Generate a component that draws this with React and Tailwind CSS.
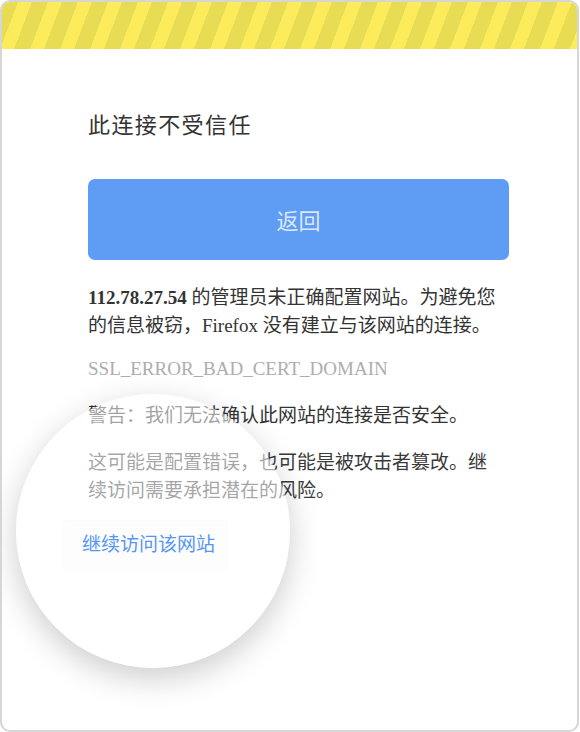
const bodyFont = {
  fontFamily: '"Liberation Serif", "Noto Sans CJK SC", serif'
}

export default function App() {
  return (
    <div className="min-h-[732px] bg-white">
      <div
        className="relative h-[732px] w-[579px] overflow-hidden rounded-[10px] border-2 border-[#d6d6d6] bg-white"
        style={bodyFont}
      >
        {/* warning stripes */}
        <div className="h-[47px] w-full bg-[repeating-linear-gradient(111deg,#e9dc55_0px,#e9dc55_15px,#fcec5b_15px,#fcec5b_28px)]" />

        <div className="ml-[86px] w-[421px]">
          <h1
            className="mt-[60px] text-[22px] leading-[28px] tracking-[1.4px] text-[#333]"
            style={{ fontFamily: '"Noto Sans CJK SC", sans-serif' }}
          >
            此连接不受信任
          </h1>

          <button
            className="mt-[42px] flex h-[81px] w-full items-center justify-center rounded-[7px] bg-[#5f9cf4] text-[22px] text-[#dbe7fc]"
            style={{ fontFamily: '"Noto Sans CJK SC", sans-serif' }}
          >
            返回
          </button>

          <p className="mt-[24px] w-[415px] text-[19px] leading-[28px] text-[#333]">
            <span className="font-bold">112.78.27.54</span> 的管理员未正确配置网站。为避免您的信息被窃，Firefox 没有建立与该网站的连接。
          </p>

          <p className="mt-[15px] text-[19px] leading-[28px] text-[#adadad]">
            SSL_ERROR_BAD_CERT_DOMAIN
          </p>

          <p className="mt-[19px] w-[415px] text-[19px] leading-[28px] text-[#333]">
            警告：我们无法确认此网站的连接是否安全。
          </p>

          <p className="mt-[19px] w-[415px] text-[19px] leading-[28px] text-[#3a3a3a]">
            这可能是配置错误，也可能是被攻击者篡改。继续访问需要承担潜在的风险。
          </p>

          <div className="relative z-10 ml-[-24px] mt-[16px] flex h-[48px] w-[163px] items-center bg-[#fdfdfd] pl-[18px] shadow-[0_0_2px_rgba(0,0,0,0.05)]">
            <a className="text-[19px] leading-[28px] text-[#5895f3]">继续访问该网站</a>
          </div>
        </div>

        {/* magnifier lens */}
        <div className="absolute left-[14px] top-[392px] h-[274px] w-[274px] rounded-full bg-white/55 shadow-[0_10px_32px_rgba(0,0,0,0.2)]" />
      </div>
    </div>
  )
}
